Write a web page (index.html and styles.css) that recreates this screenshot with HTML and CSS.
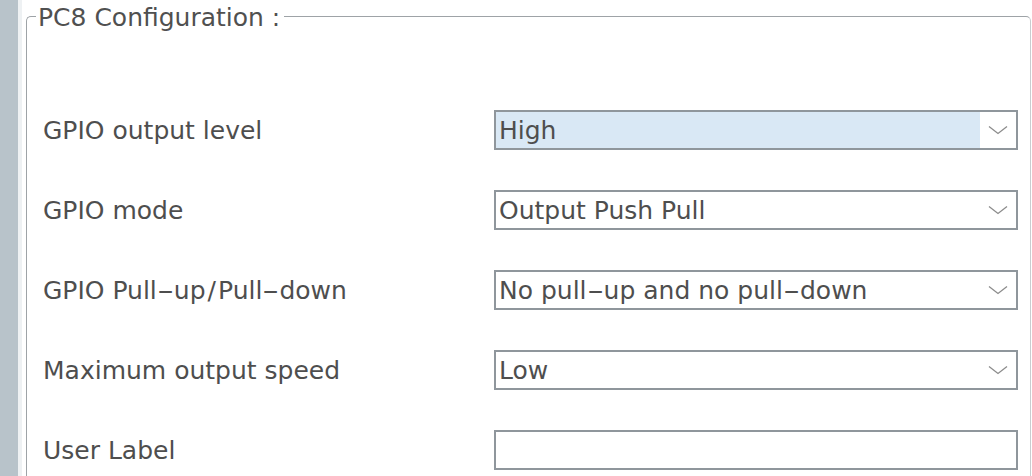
FILE: index.html
```html
<!DOCTYPE html>
<html>
<head>
<meta charset="utf-8">
<link rel="stylesheet" href="styles.css">
</head>
<body>
<div class="page">
  <div class="sidebar"></div>
  <div class="main">
    <fieldset class="group">
      <legend class="title">PC8 Configuration :</legend>
      <div class="form">
        <div class="label">GPIO output level</div>
        <div class="combo">
          <div class="value selected">High</div>
          <div class="arrow"><svg width="20" height="10" viewBox="0 0 20 10"><polyline points="1,1.5 10,8.5 19,1.5" fill="none" stroke="#8c8c8c" stroke-width="1.3"/></svg></div>
        </div>

        <div class="label">GPIO mode</div>
        <div class="combo">
          <div class="value">Output Push Pull</div>
          <div class="arrow"><svg width="20" height="10" viewBox="0 0 20 10"><polyline points="1,1.5 10,8.5 19,1.5" fill="none" stroke="#8c8c8c" stroke-width="1.3"/></svg></div>
        </div>

        <div class="label">GPIO Pull<span class="hy">-</span>up<span class="sl">/</span>Pull<span class="hy">-</span>down</div>
        <div class="combo">
          <div class="value">No pull<span class="hy">-</span>up and no pull<span class="hy">-</span>down</div>
          <div class="arrow"><svg width="20" height="10" viewBox="0 0 20 10"><polyline points="1,1.5 10,8.5 19,1.5" fill="none" stroke="#8c8c8c" stroke-width="1.3"/></svg></div>
        </div>

        <div class="label">Maximum output speed</div>
        <div class="combo">
          <div class="value">Low</div>
          <div class="arrow"><svg width="20" height="10" viewBox="0 0 20 10"><polyline points="1,1.5 10,8.5 19,1.5" fill="none" stroke="#8c8c8c" stroke-width="1.3"/></svg></div>
        </div>

        <div class="label">User Label</div>
        <div class="combo textfield"><div class="value"></div></div>
      </div>
    </fieldset>
  </div>
</div>
</body>
</html>
```
FILE: styles.css
```css
html, body {
  margin: 0;
  padding: 0;
  background: #ffffff;
  height: 100%;
  overflow: hidden;
}
.page {
  display: flex;
  height: 476px;
  overflow: hidden;
  font-family: "DejaVu Sans", sans-serif;
  font-size: 25px;
  color: #4e4e4e;
}
.sidebar {
  width: 18px;
  background: #b8c3ca;
  border-right: 4px solid #eef1f3;
  flex: none;
}
.main {
  flex: 1;
  padding: 1px 1px 0 4px;
}
.group {
  margin: 0;
  padding: 0 12px 0 16px;
  border: 1px solid #9ea3a7;
  border-right-color: #c9cccf;
  border-bottom: none;
  border-radius: 5px 5px 0 0;
  height: 600px;
  box-sizing: border-box;
}
.title {
  margin-left: -7px;
  padding: 3px 4px 0 2px;
  line-height: 27px;
  color: #505050;
}
.form {
  display: grid;
  grid-template-columns: 451px 1fr;
  grid-auto-rows: 40px;
  row-gap: 40px;
  margin-top: 79px;
}
.label {
  display: flex;
  align-items: center;
  white-space: nowrap;
}
.hy {
  display: inline-block;
  transform: scaleX(1.9);
  margin: 0 4px;
}
.sl {
  display: inline-block;
  margin: 0 2px;
}
.combo {
  display: flex;
  border: 2px solid #8f969c;
  box-sizing: border-box;
  height: 40px;
  background: #ffffff;
}
.value {
  flex: 1;
  display: flex;
  align-items: center;
  padding-left: 3px;
  white-space: nowrap;
}
.value.selected {
  background: #d9e8f5;
}
.arrow {
  width: 36px;
  display: flex;
  align-items: center;
  justify-content: center;
}
```
